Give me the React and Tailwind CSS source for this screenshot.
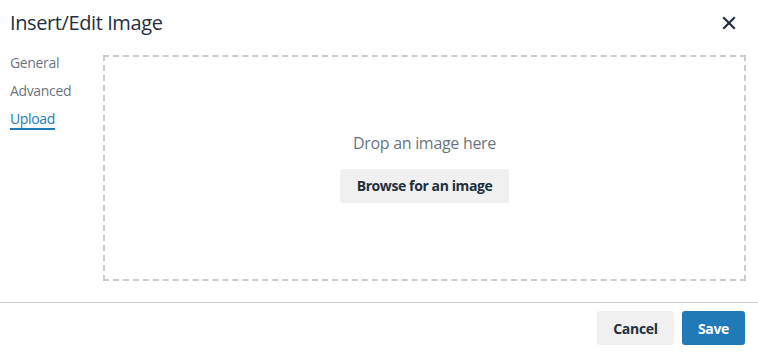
export default function App() {
  return (
    <div
      className="w-[758px] h-[352px] bg-white flex flex-col overflow-hidden text-[#222f3e]"
      style={{ fontFamily: '"Open Sans", "Noto Sans", sans-serif' }}
    >
      {/* header */}
      <div className="flex items-center justify-between h-[44px] pl-[10px] pr-[20px] pt-[1px]">
        <div className="text-[20px] leading-[26px] tracking-[-0.4px]">Insert/Edit Image</div>
        <button className="w-[18px] h-[18px] flex items-center justify-center">
          <svg width="14" height="14" viewBox="0 0 14 14">
            <path d="M2 2 L12 12 M12 2 L2 12" stroke="#222f3e" strokeWidth="2.2" strokeLinecap="square" />
          </svg>
        </button>
      </div>

      {/* body */}
      <div className="flex flex-1 pl-[10px] pr-[12px] pt-[11px] pb-[21px] border-b border-[#cccccc]">
        <div className="w-[93px] flex flex-col text-[14px] leading-[20px] tracking-[-0.35px] -mt-[2px]">
          <div className="h-[28px] text-[rgba(34,47,62,0.7)]">General</div>
          <div className="h-[28px] text-[rgba(34,47,62,0.7)]">Advanced</div>
          <div className="h-[28px]">
            <span className="inline-block text-[#207ab7] border-b-2 border-[#207ab7] leading-[18px]">Upload</span>
          </div>
        </div>
        <div className="flex-1 border-2 border-dashed border-[#cccccc] flex flex-col items-center justify-center pb-[3px]">
          <div className="text-[16px] leading-[24px] tracking-[-0.3px] text-[rgba(34,47,62,0.7)]">Drop an image here</div>
          <button className="mt-[14px] h-[34px] px-[17px] bg-[#f0f0f0] rounded-[3px] text-[14px] font-bold tracking-[-0.4px] text-[#222f3e]">
            Browse for an image
          </button>
        </div>
      </div>

      {/* footer */}
      <div className="flex justify-end gap-[8px] pt-[8px] pb-[7px] pr-[13px]">
        <button className="h-[34px] w-[77px] bg-[#f0f0f0] rounded-[3px] text-[14px] font-bold tracking-[-0.3px] text-[#222f3e]">Cancel</button>
        <button className="h-[34px] w-[63px] bg-[#207ab7] rounded-[3px] text-[14px] font-bold tracking-[-0.3px] text-white">Save</button>
      </div>
    </div>
  );
}
